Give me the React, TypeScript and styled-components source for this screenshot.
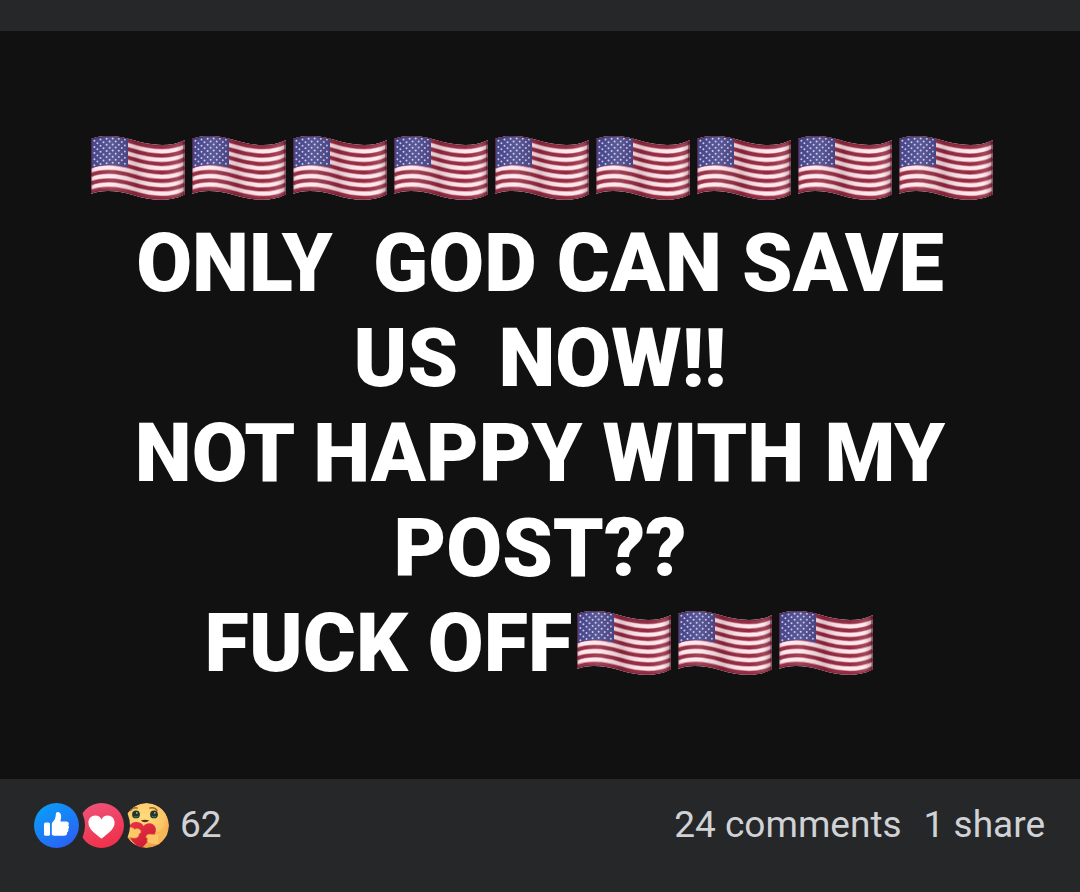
import React from "react";
import styled, { createGlobalStyle } from "styled-components";

const GlobalStyle = createGlobalStyle`
  *, *::before, *::after { box-sizing: border-box; }
  body {
    margin: 0;
    background: #252729;
    font-family: Roboto, "Liberation Sans", sans-serif;
  }
`;

const Post = styled.article`
  display: flex;
  flex-direction: column;
  min-height: 100vh;
  padding-top: 31px;
  background: #252729;
`;

const Banner = styled.section`
  padding: 90px 0 88px;
  background: #111111;
`;

const Message = styled.p`
  margin: 0;
  color: #ffffff;
  font-size: 81px;
  font-weight: 900;
  line-height: 95px;
  text-align: center;
`;

const Line = styled.span`
  display: block;
  height: 95px;
  white-space: pre;
`;

const FlagDrawing = styled.svg`
  width: 94px;
  height: 66px;
  margin: 0 2px 0 5px;
  vertical-align: -5px;
`;

const Footer = styled.footer`
  display: flex;
  align-items: center;
  justify-content: space-between;
  padding: 23px 35px 23px 34px;
`;

const PlainButton = styled.button`
  display: flex;
  align-items: center;
  padding: 0;
  border: 0;
  background: none;
  color: #d0d2d6;
  font-family: inherit;
  font-size: 37px;
  line-height: 46px;
  cursor: pointer;
`;

const Reactions = styled(PlainButton)`
  gap: 11px;
`;

const ReactionIcons = styled.span`
  display: flex;
`;

const ReactionDrawing = styled.svg`
  width: 45px;
  height: 45px;
`;

const Counts = styled.div`
  display: flex;
  gap: 22px;
`;

const WAVE = "C10 -0.5 26 0 42 5 C58 10 78 13 94 5";
const STRIPE = 4.23;

const stars: { x: number; y: number }[] = [];
for (let row = 0; row < 9; row++) {
  const count = row % 2 === 0 ? 6 : 5;
  for (let i = 0; i < count; i++) {
    const x = (row % 2 === 0 ? 3.4 : 6.4) + i * 6.1;
    const lift = 4 - 3.2 * Math.sin((Math.min(x, 38) / 38) * Math.PI * 0.85);
    stars.push({ x, y: lift + 2.6 + row * 3.05 });
  }
}

function Flag({ id }: { id: string }) {
  return (
    <FlagDrawing viewBox="0 0 94 66" role="img" aria-label="United States flag">
      <defs>
        <clipPath id={`body-${id}`}>
          <path d="M0 4 C10 -0.5 26 0 42 5 C58 10 78 13 93 5.4 Q94 5.2 94 6.4 L93.6 59.6 C78 67.8 58 65 42 60 C26 55 10 54.4 0 59 Z" />
        </clipPath>
        <linearGradient id={`shade-${id}`} x1="0" x2="1" y1="0" y2="0">
          <stop offset="0" stopColor="#3a0a1c" stopOpacity="0.22" />
          <stop offset="0.05" stopColor="#ffffff" stopOpacity="0.04" />
          <stop offset="0.22" stopColor="#ffffff" stopOpacity="0.14" />
          <stop offset="0.48" stopColor="#3a0a1c" stopOpacity="0.16" />
          <stop offset="0.75" stopColor="#ffffff" stopOpacity="0.02" />
          <stop offset="0.9" stopColor="#ffffff" stopOpacity="0.14" />
          <stop offset="1" stopColor="#3a0a1c" stopOpacity="0.35" />
        </linearGradient>
      </defs>
      <g clipPath={`url(#body-${id})`}>
        <rect width="94" height="66" fill="#ffe6ec" />
        {Array.from({ length: 7 }, (_, i) => (
          <g key={i} transform={`translate(0 ${(i * 2 + 0.5) * STRIPE})`} fill="none">
            <path d={`M0 4 ${WAVE}`} stroke="#d08a99" strokeWidth="4.9" />
            <path d={`M0 4 ${WAVE}`} stroke="#92263b" strokeWidth="3.3" />
          </g>
        ))}
        <path
          d="M0 0 H37 V32.5 C26 29.4 11 28.8 0 33.4 Z"
          fill="#403f86"
        />
        {stars.map((s, i) => (
          <circle key={i} cx={s.x} cy={s.y} r="1" fill="#c6c6ec" />
        ))}
        <rect width="94" height="66" fill={`url(#shade-${id})`} />
        <path
          d="M0 4 C10 -0.5 26 0 42 5 C58 10 78 13 93 5.4 L93.6 59.6 C78 67.8 58 65 42 60 C26 55 10 54.4 0 59 Z"
          fill="none"
          stroke="#5a1730"
          strokeOpacity="0.55"
          strokeWidth="2"
        />
      </g>
    </FlagDrawing>
  );
}

function Flags({ count, name }: { count: number; name: string }) {
  return (
    <>
      {Array.from({ length: count }, (_, i) => (
        <Flag key={i} id={`${name}${i}`} />
      ))}
    </>
  );
}

function OverlapMask({ id }: { id: string }) {
  return (
    <mask id={id} maskUnits="userSpaceOnUse" x="0" y="0" width="45" height="45">
      <rect width="45" height="45" fill="#fff" />
      <circle cx="-22.5" cy="22.5" r="28.5" fill="#000" />
    </mask>
  );
}

function LikeIcon() {
  return (
    <ReactionDrawing viewBox="0 0 45 45" aria-hidden="true">
      <defs>
        <linearGradient id="like" x1="0.15" y1="0.1" x2="0.75" y2="0.95">
          <stop offset="0" stopColor="#0b9bf8" />
          <stop offset="1" stopColor="#2a62f4" />
        </linearGradient>
      </defs>
      <circle cx="22.5" cy="22.5" r="22.5" fill="url(#like)" />
      <rect x="10" y="19.6" width="6" height="13.2" rx="1.6" fill="#fff" />
      <path
        d="M17.8 21.4 C17.8 19.8 18.6 19.1 19.6 18 C21.4 16 21.6 14 21.8 11.6 C21.9 9.8 22.8 9 24 9.1 C26.6 9.4 27.4 12.2 27.1 14.6 C26.9 16.2 26.5 17.4 26.4 18.4 H32.2 C34.2 18.4 35.2 19.8 34.8 21.3 C34.7 21.8 34.4 22.2 34.2 22.4 C35.4 23.4 35.3 25.2 34.1 26.1 C34.8 27.3 34.3 28.9 33.1 29.5 C33.3 31.5 32.2 32.8 30 32.8 H22.4 C20.6 32.8 19.4 32.6 18.5 32.2 C18 32 17.8 31.6 17.8 31.1 Z"
        fill="#fff"
      />
    </ReactionDrawing>
  );
}

function LoveIcon() {
  return (
    <ReactionDrawing viewBox="0 0 45 45" aria-hidden="true">
      <defs>
        <OverlapMask id="love-cut" />
        <linearGradient id="love" x1="0.2" y1="0" x2="0.6" y2="1">
          <stop offset="0" stopColor="#ee5379" />
          <stop offset="1" stopColor="#f0304a" />
        </linearGradient>
      </defs>
      <g mask="url(#love-cut)">
        <circle cx="22.5" cy="22.5" r="22.5" fill="url(#love)" />
        <path
          d="M22.5 16.4 C24 13.5 26.2 12.6 28.7 12.6 C32.6 12.6 35.6 15.6 35.6 19.8 C35.6 26.6 28.4 30.6 23.8 34.8 C22.8 35.7 22.2 35.7 21.2 34.8 C16.6 30.6 9.4 26.6 9.4 19.8 C9.4 15.6 12.4 12.6 16.3 12.6 C18.8 12.6 21 13.5 22.5 16.4 Z"
          fill="#fff"
        />
      </g>
    </ReactionDrawing>
  );
}

function CareIcon() {
  return (
    <ReactionDrawing viewBox="0 0 45 45" aria-hidden="true">
      <defs>
        <OverlapMask id="care-cut" />
        <clipPath id="care-face">
          <circle cx="22.5" cy="22.5" r="22.5" />
        </clipPath>
        <radialGradient id="care" cx="0.45" cy="0.3" r="0.72">
          <stop offset="0" stopColor="#ffdb7c" />
          <stop offset="0.6" stopColor="#fbc666" />
          <stop offset="1" stopColor="#ee9a42" />
        </radialGradient>
        <linearGradient id="care-heart" x1="0" y1="0" x2="0.5" y2="1">
          <stop offset="0" stopColor="#ea3447" />
          <stop offset="1" stopColor="#cf1d35" />
        </linearGradient>
      </defs>
      <g mask="url(#care-cut)">
        <g clipPath="url(#care-face)">
          <circle cx="22.5" cy="22.5" r="22.5" fill="url(#care)" />
          <path d="M6.6 7.4 C8.2 5 10.6 4.4 13 5" fill="none" stroke="#a3662b" strokeWidth="1.7" strokeLinecap="round" />
          <path d="M26 5 C28.6 4.4 31.4 5 33 7.4" fill="none" stroke="#a3662b" strokeWidth="1.7" strokeLinecap="round" />
          <circle cx="12" cy="11.4" r="3.9" fill="#22362a" />
          <circle cx="30" cy="11.4" r="3.9" fill="#22362a" />
          <circle cx="12.8" cy="9.9" r="0.9" fill="#9fb5a2" />
          <circle cx="30.8" cy="9.9" r="0.9" fill="#9fb5a2" />
          <path d="M10 13.2 Q12 15 14.2 13.2" fill="none" stroke="#4d7a53" strokeWidth="1" />
          <path d="M28 13.2 Q30 15 32.2 13.2" fill="none" stroke="#4d7a53" strokeWidth="1" />
          <path d="M16.8 17.4 Q21 16.2 25.2 17.4 Q23.6 19.2 21 19.2 Q18.4 19.2 16.8 17.4 Z" fill="#54331d" />
          <path
            d="M19.6 23 C22 20 26.4 19.6 29.2 21.6 C32.6 24.2 32.4 28.4 30.4 31.6 C27 36.8 22.4 40 17.4 45.6 C11.6 41.4 4.4 36.6 4.2 28.4 C4.2 23 7.2 19.2 11.6 19 C15.2 18.8 18.2 20.4 19.6 23 Z"
            fill="url(#care-heart)"
          />
          <path
            d="M0 24.8 C4.4 23.2 8.4 24.4 10.6 26.2 C12.6 25.2 15.6 25.6 16.6 27.4 C17.4 29.2 16.4 30.6 14.8 31 C15.2 33.8 12.6 35.4 9.4 35 C6 34.8 3 34.6 0 33.6 Z"
            fill="#fdc968"
            stroke="#e8963d"
            strokeWidth="0.7"
          />
          <path
            d="M34.6 29.4 C32 31.4 31 32 29 31.6 C26 31 23.6 31 22.4 32.8 C21.6 34.2 22.4 35.4 23.8 35.6 C22.4 37.8 23.4 40 25.8 40.6 C27.6 41.2 31 42.4 35 41.2 L40 33 Z"
            fill="#fcc565"
            stroke="#e8963d"
            strokeWidth="0.7"
          />
          <path d="M34.4 30.2 L41 24 L44 32 L34 41 Z" fill="#f7b758" />
        </g>
      </g>
    </ReactionDrawing>
  );
}

export default function App() {
  return (
    <>
      <GlobalStyle />
      <Post>
        <Banner>
          <Message>
            <Line>
              <Flags count={9} name="top" />
            </Line>
            <Line>{"ONLY  GOD CAN SAVE"}</Line>
            <Line>{"US  NOW!!"}</Line>
            <Line>NOT HAPPY WITH MY</Line>
            <Line>POST??</Line>
            <Line>
              FUCK OFF
              <Flags count={3} name="end" />
            </Line>
          </Message>
        </Banner>
        <Footer>
          <Reactions type="button">
            <ReactionIcons>
              <LikeIcon />
              <LoveIcon />
              <CareIcon />
            </ReactionIcons>
            <span>62</span>
          </Reactions>
          <Counts>
            <PlainButton type="button">24 comments</PlainButton>
            <PlainButton type="button">1 share</PlainButton>
          </Counts>
        </Footer>
      </Post>
    </>
  );
}
